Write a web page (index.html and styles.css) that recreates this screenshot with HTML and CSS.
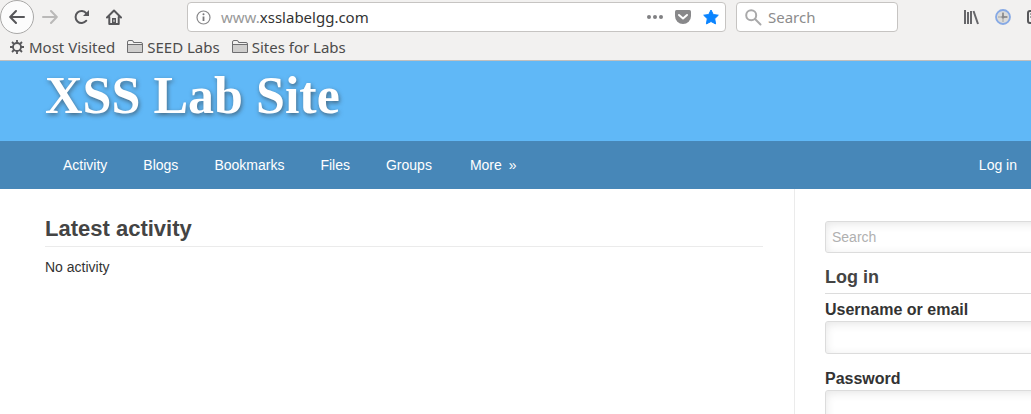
FILE: index.html
```html
<!DOCTYPE html>
<html lang="en">
<head>
<meta charset="utf-8">
<meta name="viewport" content="width=device-width, initial-scale=1">
<title>XSS Lab Site</title>
<link rel="stylesheet" href="styles.css">
</head>
<body>
<div class="browser">
  <div class="toolbar">
    <div class="nav-buttons">
      <button class="tool back" type="button" aria-label="Back">
        <svg width="16" height="16" viewBox="0 0 16 16" fill="none" stroke="#57575a" stroke-width="2" stroke-linecap="round" stroke-linejoin="round"><path d="M15 8H1.500M7 2L1.200 8L7 14"/></svg>
      </button>
      <button class="tool" type="button" aria-label="Forward" disabled>
        <svg width="16" height="16" viewBox="0 0 16 16" fill="none" stroke="#bab9b8" stroke-width="2" stroke-linecap="round" stroke-linejoin="round"><path d="M1 8H14.500M9 2L14.800 8L9 14"/></svg>
      </button>
      <button class="tool" type="button" aria-label="Reload">
        <svg width="16" height="16" viewBox="0 0 16 16"><path d="M12.300 11.700A6 6 0 1 1 12.300 4.300" fill="none" stroke="#57575a" stroke-width="2" stroke-linecap="round"/><path d="M15 1V7H9Z" fill="#57575a"/></svg>
      </button>
      <button class="tool" type="button" aria-label="Home">
        <svg width="16" height="16" viewBox="0 0 16 16" fill="none" stroke="#57575a" stroke-width="2" stroke-linecap="round" stroke-linejoin="round"><path d="M1 8.500L8 1.500L15 8.500M3.300 8V15H12.700V8"/><path d="M6 15V9H10V15Z" fill="#57575a" stroke="none"/><path d="M8 11V12.500" stroke="#f2f1f0" stroke-width="1"/></svg>
      </button>
    </div>
    <div class="address">
      <svg width="15" height="15" viewBox="0 0 15 15"><circle cx="7.500" cy="7.500" r="6.500" fill="none" stroke="#88888a" stroke-width="1.200"/><path d="M7.500 6.500V11" stroke="#77777a" stroke-width="1.800"/><circle cx="7.500" cy="4.200" r="1" fill="#77777a"/></svg>
      <div class="url"><span class="url-dim">www.</span>xsslabelgg.com</div>
      <button class="action" type="button" aria-label="Page actions"><svg width="16" height="16" viewBox="0 0 16 16" fill="#808082"><circle cx="2" cy="8" r="2"/><circle cx="8" cy="8" r="2"/><circle cx="14" cy="8" r="2"/></svg></button>
      <button class="action" type="button" aria-label="Save to Pocket"><svg width="16" height="16" viewBox="0 0 16 16"><path d="M1.500 1H14.500Q16 1 16 2.500V7A8 8 0 0 1 0 7V2.500Q0 1 1.500 1Z" fill="#88888a"/><path d="M4 6L8 9.500L12 6" fill="none" stroke="#fff" stroke-width="2" stroke-linecap="round" stroke-linejoin="round"/></svg></button>
      <button class="action" type="button" aria-label="Edit bookmark"><svg width="16" height="16" viewBox="0 0 16 16"><path d="M8 1L10.300 5.500L15.300 6.200L11.700 9.700L12.600 14.900L8 12.500L3.400 14.900L4.300 9.700L.7 6.200L5.700 5.500Z" fill="#0a84ff" stroke="#0a84ff" stroke-linejoin="round"/></svg></button>
    </div>
    <label class="find">
      <svg width="17" height="17" viewBox="0 0 17 17" fill="none" stroke="#a9a9aa" stroke-width="2" stroke-linecap="round"><circle cx="6.200" cy="6.200" r="5"/><path d="M10 10L15.500 15.500"/></svg>
      <input class="find-input" type="text" placeholder="Search" aria-label="Search the web">
    </label>
    <div class="extras">
      <button class="tool" type="button" aria-label="Library"><svg width="16" height="16" viewBox="0 0 16 16" stroke="#67676a" stroke-width="2" fill="none"><path d="M2 1V15M5 3V15M8 2V15"/><path d="M10.500 2L15 15"/></svg></button>
      <button class="tool" type="button" aria-label="Live headers"><svg width="16" height="16" viewBox="0 0 16 16"><circle cx="8" cy="8" r="7" fill="#dcdcda" stroke="#86a9e5" stroke-width="1.800"/><path d="M8 3V13M3 8H13" stroke="#a2a2a2"/><path d="M8 4V8H12" fill="none" stroke="#88888a" stroke-width="1.500"/><circle cx="8" cy="8" r="1.500" fill="#88888a"/></svg></button>
      <button class="tool" type="button" aria-label="Sidebars"><svg width="16" height="16" viewBox="0 0 16 16" fill="none" stroke="#57575a" stroke-width="2"><rect x="1" y="2" width="14" height="12" rx="2"/><path d="M3 5H6M3 8H6" stroke-width="1"/></svg></button>
    </div>
  </div>
  <div class="bookmarks">
    <a class="bookmark" href="#"><svg width="16" height="16" viewBox="0 0 16 16" fill="none" stroke="#57575a"><circle cx="8" cy="8" r="4" stroke-width="1.800"/><path d="M8 1V4M8 12V15M1 8H4M12 8H15M3 3L5 5M11 11L13 13M13 3L11 5M3 13L5 11" stroke-width="1.800"/></svg>Most Visited</a>
    <a class="bookmark" href="#"><svg width="16" height="16" viewBox="0 0 16 16"><path d="M.5 13.500V3Q.5 1.500 2 1.500H5Q6.500 1.500 6.500 3.500H14Q15.500 3.500 15.500 5V13.500Z" fill="#f2f1f0" stroke="#6e6e70"/><path d="M1 6H15V13H1Z" fill="#cfcecd"/><path d="M1 5.500H15" stroke="#6e6e70"/></svg>SEED Labs</a>
    <a class="bookmark" href="#"><svg width="16" height="16" viewBox="0 0 16 16"><path d="M.5 13.500V3Q.5 1.500 2 1.500H5Q6.500 1.500 6.500 3.500H14Q15.500 3.500 15.500 5V13.500Z" fill="#f2f1f0" stroke="#6e6e70"/><path d="M1 6H15V13H1Z" fill="#cfcecd"/><path d="M1 5.500H15" stroke="#6e6e70"/></svg>Sites for Labs</a>
  </div>
</div>
<header class="site-header">
  <h1 class="site-title"><a href="#">XSS Lab Site</a></h1>
</header>
<nav class="site-nav">
  <a href="#">Activity</a>
  <a href="#">Blogs</a>
  <a href="#">Bookmarks</a>
  <a href="#">Files</a>
  <a href="#">Groups</a>
  <a class="more" href="#">More <span>»</span></a>
  <a class="login-link" href="#">Log in</a>
</nav>
<div class="layout">
  <main class="main">
    <h2 class="main-title">Latest activity</h2>
    <p class="empty">No activity</p>
  </main>
  <aside class="sidebar">
    <input class="field search-field" type="text" placeholder="Search" aria-label="Search the site">
    <h3 class="side-title">Log in</h3>
    <form class="login">
      <label class="field-label" for="username">Username or email</label>
      <input class="field" id="username" type="text">
      <label class="field-label" for="password">Password</label>
      <input class="field" id="password" type="password">
    </form>
  </aside>
</div>
</body>
</html>
```
FILE: styles.css
```css
* {
  box-sizing: border-box;
}

body {
  margin: 0;
  min-height: 100vh;
  display: flex;
  flex-direction: column;
  overflow: hidden;
  background: #fff;
  color: #333;
  font: 14px/20px "Liberation Sans", Arial, sans-serif;
}

svg {
  display: block;
  flex: none;
}

a {
  color: inherit;
  text-decoration: none;
}

button {
  border: 0;
  padding: 0;
  background: none;
}

.browser {
  background: #f2f1f0;
  border-bottom: 1px solid #c1bfbd;
  color: #4c4c4c;
  font: 15px/20px "Noto Sans", "Open Sans", sans-serif;
}

.toolbar {
  display: flex;
  align-items: center;
  height: 34px;
  overflow: hidden;
}

.nav-buttons {
  display: flex;
  align-items: center;
  flex: none;
  width: 187px;
}

.tool {
  display: flex;
  align-items: center;
  justify-content: center;
  flex: none;
  width: 32px;
  height: 32px;
}

.back {
  width: 34px;
  height: 34px;
  border: 1px solid #a9a8a7;
  border-radius: 50%;
  background: #fcfcfc;
}

.address,
.find {
  display: flex;
  align-items: center;
  height: 30px;
  border: 1px solid #c6c4c2;
  border-radius: 4px;
  background: #fff;
}

.address {
  flex: 1;
  gap: 12px;
  padding: 0 6px 0 8px;
}

.url {
  flex: 1;
  margin-left: -2px;
  color: #333;
}

.url-dim {
  color: #999;
}

.find {
  flex: none;
  width: 162px;
  margin-left: 10px;
  padding: 0 8px;
  gap: 6px;
}

.find-input {
  width: 100%;
  min-width: 0;
  border: 0;
  padding: 0;
  outline: 0;
  background: none;
  font: inherit;
}

.find-input::placeholder {
  color: #8c8c8c;
}

.extras {
  display: flex;
  flex: none;
  width: 133px;
  padding-left: 57px;
}

.bookmarks {
  display: flex;
  gap: 12px;
  height: 26px;
  padding: 4px 9px;
}

.bookmark {
  display: flex;
  align-items: center;
  gap: 4px;
  white-space: nowrap;
}

.site-header {
  padding: 5px 45px 15px;
  background: #60b8f7;
}

.site-title {
  margin: 0;
  color: #fff;
  font: bold 52px/60px "Liberation Serif", "Times New Roman", serif;
  text-shadow: 1px 2px 4px rgba(51, 51, 51, 0.6);
}

.site-nav {
  display: flex;
  padding: 0 14px 0 45px;
  background: #4787b8;
  color: #fff;
}

.site-nav a {
  padding: 14px 18px;
}

.site-nav .more {
  padding-left: 20px;
}

.more span {
  margin-left: 3px;
}

.site-nav .login-link {
  margin-left: auto;
  padding-right: 0;
}

.layout {
  display: flex;
  flex: 1;
}

.main {
  flex: 1;
  padding: 26px 31px 0 45px;
}

.main-title {
  margin: 0 0 10px;
  padding-bottom: 4px;
  border-bottom: 1px solid #ebebeb;
  color: #444;
  font-size: 22px;
  line-height: 27px;
}

.empty {
  margin: 0;
}

.sidebar {
  flex: none;
  width: 237px;
  height: 225px;
  padding: 32px 0 0 30px;
  border-left: 1px solid #ebebeb;
  overflow: hidden;
}

/* Sidebar fields run past the right edge of the window. */
.field {
  display: block;
  width: calc(100% + 16px);
  height: 33px;
  padding: 0 6px;
  border: 1px solid #dcdcdc;
  border-radius: 3px;
  box-shadow: inset 0 2px 10px rgba(0, 0, 0, 0.1);
  background: #fff;
  font: inherit;
}

.search-field {
  height: 32px;
}

.field::placeholder {
  color: #b0b0b0;
}

.side-title {
  margin: 12px 0 6px;
  padding-bottom: 4px;
  border-bottom: 1px solid #dcdcdc;
  color: #444;
  font-size: 18px;
  line-height: 24px;
}

.field-label {
  display: block;
  margin-bottom: 1px;
  font-size: 16px;
  font-weight: bold;
  line-height: 20px;
}

.field + .field-label {
  margin-top: 15px;
}
```
